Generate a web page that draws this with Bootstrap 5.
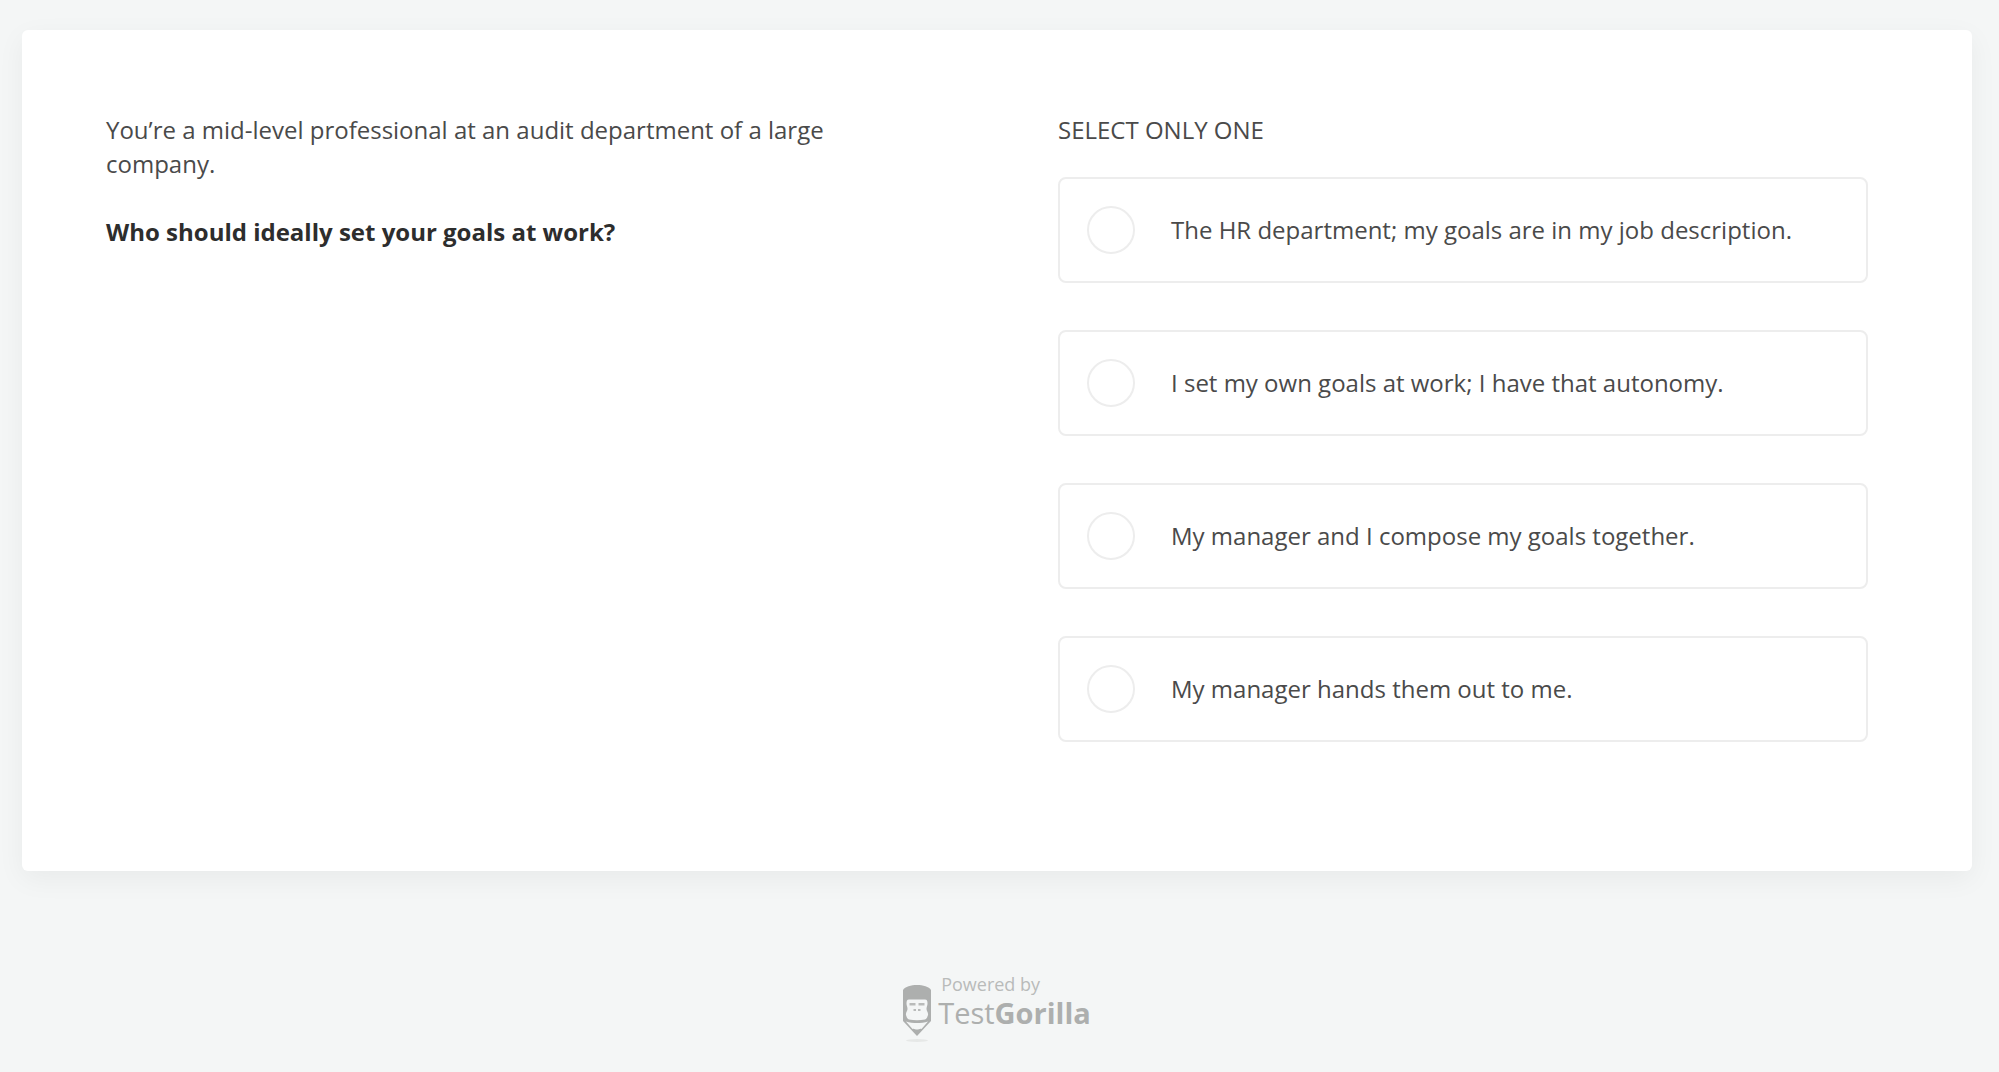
<!DOCTYPE html>
<html lang="en">
<head>
<meta charset="utf-8">
<meta name="viewport" content="width=device-width, initial-scale=1">
<title>Assessment question</title>
<link rel="stylesheet" href="https://cdn.jsdelivr.net/npm/bootstrap@5.3.0/dist/css/bootstrap.min.css">
<style>
  body { background: #f4f6f6; color: #4a4a4a; font-family: "Open Sans", "Noto Sans", sans-serif; font-size: 24px; line-height: 34px; }
  .page-wrap { padding: 30px 27px 0 22px; }
  .question-card { padding: 83px 104px 129px 84px; border-radius: 6px; box-shadow: 0 8px 28px rgba(0, 0, 0, .05); }
  .question-row { --bs-gutter-x: 142px; --bs-gutter-y: 32px; }
  .prompt-bold { color: #2d2d2d; font-weight: 700; }
  .answers { gap: 47px; }
  .answers-title { margin-bottom: 30px; font-size: 24px; line-height: 34px; }
  .answer { min-height: 106px; padding: 16px 27px; gap: 36px; border: 2px solid #ededed; border-radius: 8px; cursor: pointer; }
  .answer .form-check-input { width: 48px; height: 48px; margin: 0; border: 2px solid #ededed; background-color: #fff; }
  .answer .form-check-input:checked { background-color: #46a997; border-color: #46a997; }
  .brand { padding-top: 99px; }
  .brand-link { gap: 7px; color: #adafae; }
  .brand-words { padding-bottom: 15px; }
  .brand-top { font-size: 18px; line-height: 28px; padding-left: 3px; color: #b9bbba; }
  .brand-name { font-size: 29px; line-height: 30px; }
</style>
</head>
<body>
<div class="page-wrap">
  <main class="question-card bg-white">
    <div class="row question-row row-cols-1 row-cols-lg-2">
      <section class="col">
        <p class="mb-0">You’re a mid-level professional at an audit department of a large company.</p>
        <br>
        <p class="prompt-bold mb-0">Who should ideally set your goals at work?</p>
      </section>
      <fieldset class="col">
        <legend class="answers-title">SELECT ONLY ONE</legend>
        <div class="answers d-flex flex-column">
          <label class="answer d-flex align-items-center" for="a1"><input class="form-check-input flex-shrink-0" type="radio" name="answer" id="a1"><span>The HR department; my goals are in my job description.</span></label>
          <label class="answer d-flex align-items-center" for="a2"><input class="form-check-input flex-shrink-0" type="radio" name="answer" id="a2"><span>I set my own goals at work; I have that autonomy.</span></label>
          <label class="answer d-flex align-items-center" for="a3"><input class="form-check-input flex-shrink-0" type="radio" name="answer" id="a3"><span>My manager and I compose my goals together.</span></label>
          <label class="answer d-flex align-items-center" for="a4"><input class="form-check-input flex-shrink-0" type="radio" name="answer" id="a4"><span>My manager hands them out to me.</span></label>
        </div>
      </fieldset>
    </div>
  </main>
  <footer class="brand d-flex justify-content-center">
    <a class="brand-link d-flex align-items-end text-decoration-none" href="#">
      <svg width="28" height="58" viewBox="0 0 28 58" aria-hidden="true">
        <path fill="#adafae" d="M0 5C2 1.500 8 0 14 0s12 1.500 14 5v31L14 51 0 36z"/>
        <path fill="#f4f6f6" d="M6 14.500h16c2 0 2.500 1.500 2.500 4 0 2-1 3.500-1 5.500s2 3.500 1.500 6c-.5 2-1.500 4-3 4.500-5 1-11 1-16 0-1.500-.5-2.500-2.500-3-4.500-.5-2.500 1.500-4 1.500-6s-1-3.500-1-5.500c0-2.500.5-4 2.500-4z"/>
        <path fill="#f4f6f6" d="M3 36.500c7 2 15 2 22 0l-6.500 7.500c-1.500-1-2.500.5-4.500.5s-3-1.500-4.500-.5z"/>
        <path fill="#b9bbba" d="M6.500 18h6v2.500h-6zM15.500 18h6v2.500h-6zM10.500 24h2.500v2h-2.500zM15 24h2.500v2H15z"/>
        <ellipse cx="14" cy="55.500" rx="11" ry="1.500" fill="#e6e8e7"/>
      </svg>
      <span class="brand-words d-flex flex-column">
        <span class="brand-top">Powered by</span>
        <span class="brand-name">Test<b>Gorilla</b></span>
      </span>
    </a>
  </footer>
</div>
<script src="https://cdn.jsdelivr.net/npm/bootstrap@5.3.0/dist/js/bootstrap.bundle.min.js"></script>
</body>
</html>
